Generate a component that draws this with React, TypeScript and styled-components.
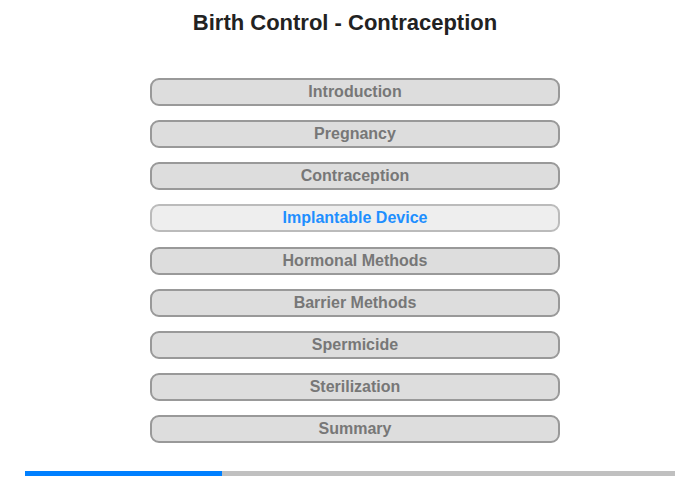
import styled, { createGlobalStyle } from 'styled-components';

const GlobalStyle = createGlobalStyle`
  html, body {
    margin: 0;
    padding: 0;
    background: #fff;
    font-family: "Liberation Sans", Arial, sans-serif;
  }
`;

const Page = styled.div`
  width: 700px;
  height: 480px;
  display: flex;
  flex-direction: column;
  align-items: center;
  box-sizing: border-box;
`;

const Title = styled.h1`
  margin: 10px 10px 0 0;
  height: 26px;
  font-size: 22px;
  line-height: 26px;
  font-weight: bold;
  color: #222;
`;

const Menu = styled.nav`
  margin: 42px 0 0 10px;
  display: flex;
  flex-direction: column;
  gap: 14.125px;
`;

const MenuButton = styled.button<{ $active?: boolean }>`
  width: 410px;
  height: 28px;
  box-sizing: border-box;
  border-radius: 9px;
  border: 2px solid ${(p) => (p.$active ? '#bbb' : '#999')};
  background: ${(p) => (p.$active ? '#eee' : '#ddd')};
  color: ${(p) => (p.$active ? '#1e8fff' : '#777')};
  font-family: "Liberation Sans", Arial, sans-serif;
  font-size: 16px;
  font-weight: bold;
  padding: 0;
  cursor: pointer;
`;

const Progress = styled.div`
  margin-top: 28px;
  width: 650px;
  height: 5px;
  background: #c0c0c0;
  display: flex;
`;

const ProgressFill = styled.div`
  height: 100%;
  background: #0080ff;
`;

const items = [
  'Introduction',
  'Pregnancy',
  'Contraception',
  'Implantable Device',
  'Hormonal Methods',
  'Barrier Methods',
  'Spermicide',
  'Sterilization',
  'Summary',
];

const App = () => {
  const current = 3;
  return (
    <Page>
      <GlobalStyle />
      <Title>Birth Control - Contraception</Title>
      <Menu>
        {items.map((label, i) => (
          <MenuButton key={label} $active={i === current}>
            {label}
          </MenuButton>
        ))}
      </Menu>
      <Progress>
        <ProgressFill style={{ width: `${(197 / 650) * 100}%` }} />
      </Progress>
    </Page>
  );
};

export default App;
